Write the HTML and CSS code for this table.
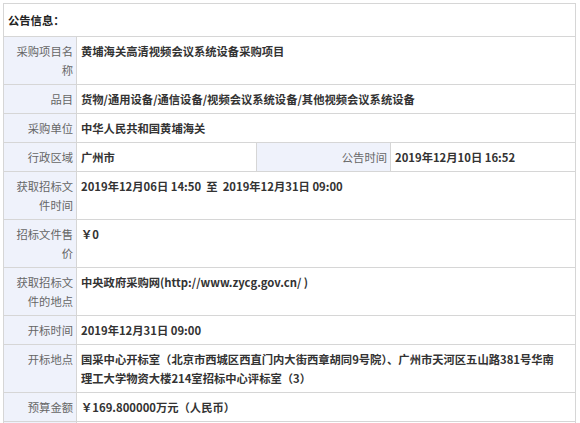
FILE: index.html
```html
<!DOCTYPE html>
<html lang="zh-CN">
<head>
<meta charset="utf-8">
<title>公告信息</title>
<link rel="stylesheet" href="styles.css">
</head>
<body>
<div class="page">
<table class="info">
  <colgroup>
    <col class="c-label">
    <col class="c-val">
    <col class="c-label2">
    <col class="c-val2">
  </colgroup>
  <tr class="head"><th colspan="4">公告信息：</th></tr>
  <tr><td class="lbl">采购项目名称</td><td class="val" colspan="3">黄埔海关高清视频会议系统设备采购项目</td></tr>
  <tr><td class="lbl">品目</td><td class="val" colspan="3">货物/通用设备/通信设备/视频会议系统设备/其他视频会议系统设备</td></tr>
  <tr><td class="lbl">采购单位</td><td class="val" colspan="3">中华人民共和国黄埔海关</td></tr>
  <tr><td class="lbl">行政区域</td><td class="val">广州市</td><td class="lbl">公告时间</td><td class="val">2019年12月10日 16:52</td></tr>
  <tr><td class="lbl">获取招标文件时间</td><td class="val" colspan="3">2019年12月06日 14:50&nbsp; 至&nbsp; 2019年12月31日 09:00</td></tr>
  <tr><td class="lbl">招标文件售价</td><td class="val" colspan="3">￥0</td></tr>
  <tr><td class="lbl">获取招标文件的地点</td><td class="val" colspan="3">中央政府采购网(http://www.zycg.gov.cn/ )</td></tr>
  <tr><td class="lbl">开标时间</td><td class="val" colspan="3">2019年12月31日 09:00</td></tr>
  <tr><td class="lbl">开标地点</td><td class="val" colspan="3">国采中心开标室（北京市西城区西直门内大街西章胡同9号院）、广州市天河区五山路381号华南理工大学物资大楼214室招标中心评标室（3）</td></tr>
  <tr><td class="lbl">预算金额</td><td class="val" colspan="3">￥169.800000万元（人民币）</td></tr>
  <tr><td class="lbl">&nbsp;</td><td class="val" colspan="3">&nbsp;</td></tr>
</table>
</div>
</body>
</html>
```
FILE: styles.css
```css
html, body {
  margin: 0;
  padding: 0;
  background: #ffffff;
}
.page {
  padding: 3px 0 0 3px;
  font-family: "Noto Sans CJK SC", "Noto Sans", sans-serif;
  font-size: 11.3px;
  line-height: 19px;
  color: #333333;
}
.info {
  width: 572px;
  table-layout: fixed;
  border-collapse: collapse;
}
.c-label { width: 73px; }
.c-val { width: 180px; }
.c-label2 { width: 134px; }
.c-val2 { width: 185px; }
.info th,
.info td {
  border: 1px solid #d6d6d6;
  vertical-align: top;
}
.head th {
  text-align: left;
  font-weight: 700;
  color: #222222;
  padding: 7px 4px 6px 4px;
}
.lbl {
  background: #eff2fb;
  color: #666666;
  text-align: right;
  padding: 5px 3px 4px 11px;
  font-weight: 400;
}
.val {
  font-weight: 700;
  color: #333333;
  padding: 5px 10px 4px 4px;
}
```
